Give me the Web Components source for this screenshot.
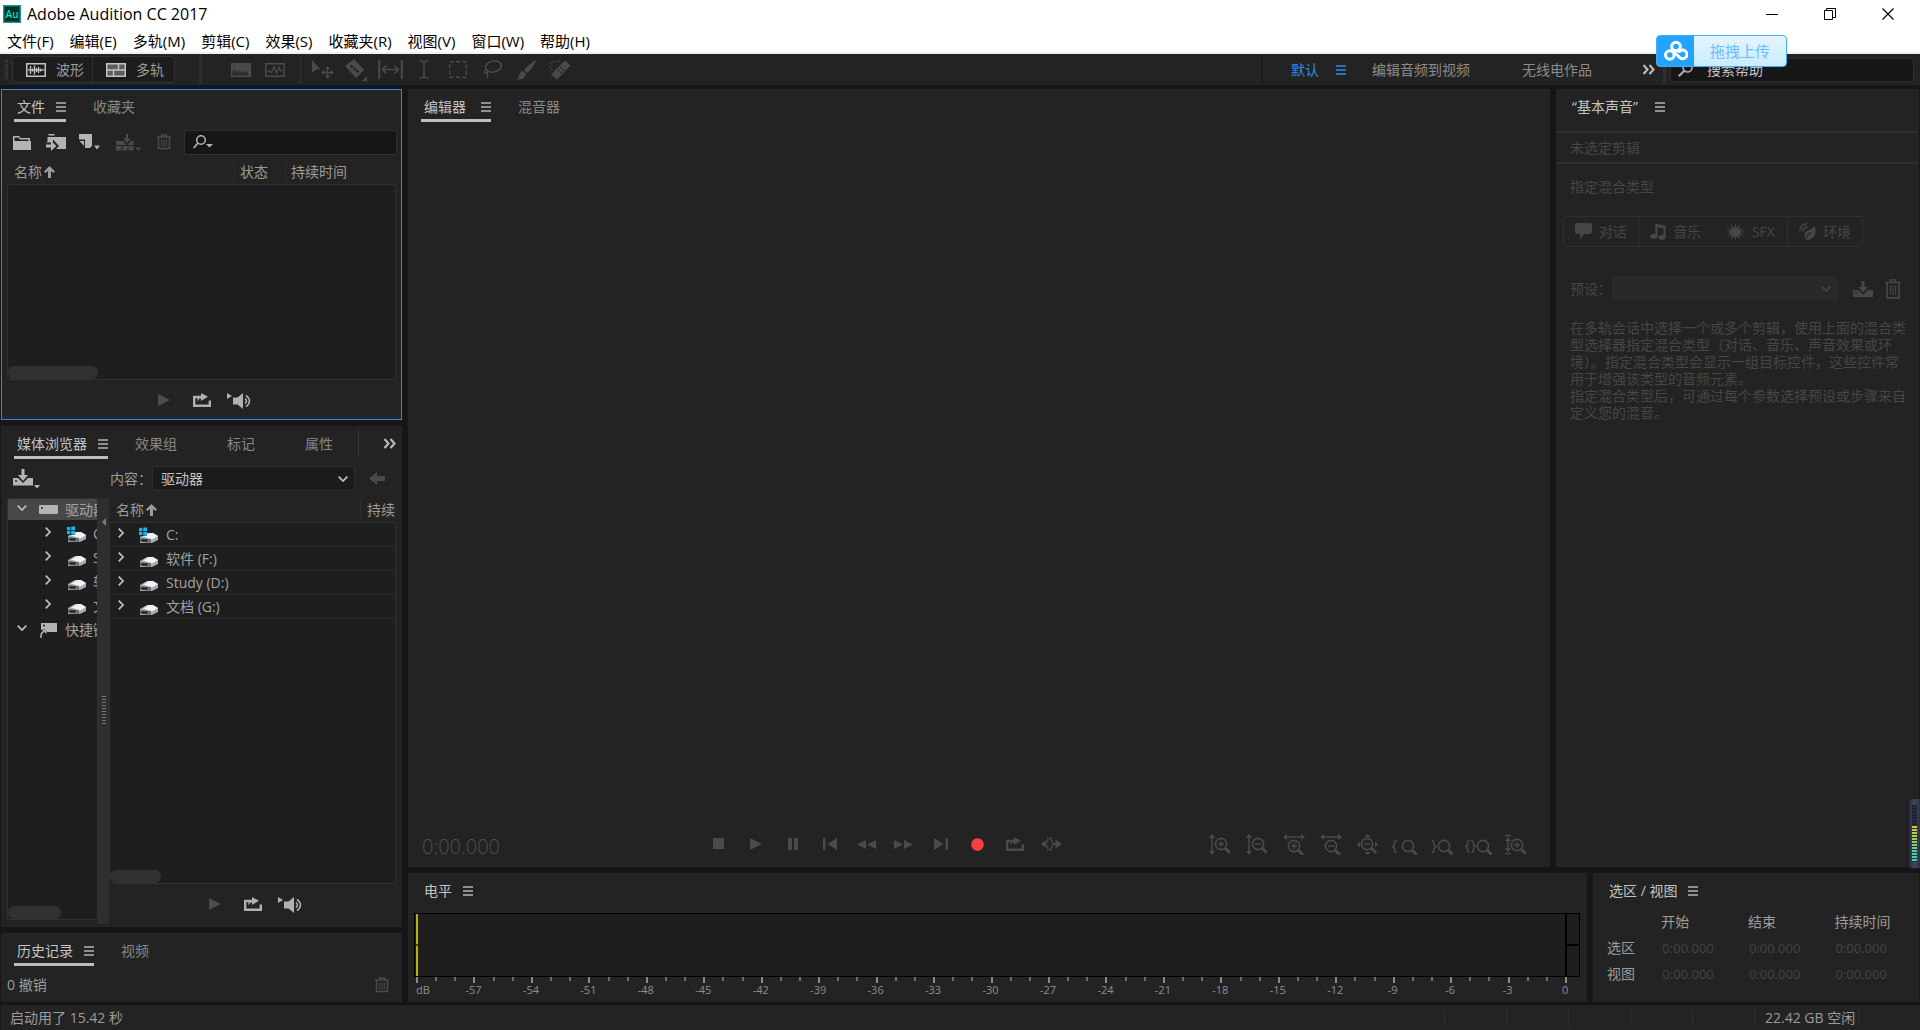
<!DOCTYPE html>
<html lang="zh-CN">
<head>
<meta charset="utf-8">
<title>Adobe Audition CC 2017</title>
<style>
html,body{height:100%;margin:0}
body{background:#161616;color:#9c9c9c;font:14px/20px "Open Sans","Noto Sans CJK SC",sans-serif;overflow:hidden}
</style>
</head>
<body>
<audition-app></audition-app>
<script>
const BASE = `<style>
*{box-sizing:border-box}
:host{display:block;box-sizing:border-box}
:host([hidden]){display:none}
button,input,select{font:inherit;color:inherit;background:none;border:0;margin:0;padding:0;outline:0;border-radius:0}
button{display:flex;align-items:center;justify-content:center;white-space:nowrap}
</style>`;
function define(name, html, setup) {
  const tpl = document.createElement('template');
  tpl.innerHTML = BASE + html;
  customElements.define(name, class extends HTMLElement {
    constructor() {
      super();
      this.attachShadow({ mode: 'open' }).append(tpl.content.cloneNode(true));
    }
    connectedCallback() { if (setup) setup(this, this.shadowRoot); }
  });
}

/* ---------- icons: [width, height, markup] ---------- */
const lens = (x, y, sign) => `<circle cx="${x}" cy="${y}" r="5.6" fill="none" stroke="currentColor" stroke-width="1.6"/>
<path d="M${x + 4} ${y + 4}l5 5" stroke="currentColor" stroke-width="3"/>` +
(sign ? `<path d="M${x - 3} ${y}h6${sign === '+' ? `M${x} ${y - 3}v6` : ''}" stroke="currentColor" stroke-width="1.4" fill="none"/>` : '');
const drive = `<path d="M1 10l7-4h6l5 3v4l-6 3H1z" fill="#a9adb2"/><path d="M4 9.500l6-3.500h4l5 3-6 3.500z" fill="#f1f2f5"/><path d="M1 11l11 1v4l-11-1z" fill="#6d7176"/><path d="M2.500 12.500h6v2h-6z" fill="#1c1c1c"/>`;
const ICONS = {
  au: [18, 18, `<rect width="18" height="18" fill="#0a9a86"/><rect x="1.500" y="1.500" width="15" height="15" fill="#022b2b"/><text x="9" y="13" text-anchor="middle" font-family="Open Sans,sans-serif" font-size="10" font-weight="600" fill="#00e4bb">Au</text>`],
  min: [12, 14, `<path d="M0 7.500h12" stroke="#000"/>`],
  restore: [12, 14, `<path d="M.5 3.500h8v9h-8zM2.500 3.500v-2h9v9h-3" fill="none" stroke="#000"/>`],
  close: [12, 14, `<path d="M.5 1.500l11 11M11.500 1.500l-11 11" fill="none" stroke="#000" stroke-width="1.200"/>`],
  menu: [10, 10, `<path d="M0 1h10M0 5h10M0 9h10" stroke="currentColor" stroke-width="1.300"/>`],
  wave: [20, 14, `<rect x=".75" y=".75" width="18.500" height="12.500" fill="none" stroke="currentColor" stroke-width="1.500"/><path d="M2 7h16" stroke="currentColor" stroke-width="1.300"/><path d="M4.500 3v8M8.500 2.500v9M12.500 4v6M6.500 5.500v3M10.500 5v4M14.500 5.500v3" stroke="currentColor" stroke-width="1.300"/>`],
  multi: [20, 14, `<rect x=".75" y=".75" width="18.500" height="12.500" fill="#5c5c5c" stroke="currentColor" stroke-width="1.500"/><path d="M1 7h18M12.500 1v6M7.500 7v6" stroke="currentColor" stroke-width="1.400"/>`],
  spectral: [20, 14, `<rect width="20" height="14" fill="currentColor"/><path d="M1.500 12.500v-4l1-2 .8 4 1-5 1 5 1-3 1 4 1-5 1 4 1-3 1 4 1-5 1 4 1-3 1 4 1-4 1 3V12.500z" fill="#2c2c2c"/>`],
  pitch: [20, 14, `<rect x=".75" y=".75" width="18.500" height="12.500" fill="none" stroke="currentColor" stroke-width="1.500"/><path d="M2 9l2.500-1.500 2 2L9 4l2.500 6 2.500-6 1.500 4 3-1" fill="none" stroke="currentColor" stroke-width="1.300"/>`],
  move: [23, 20, `<path d="M1 0l8.500 9.500H5L1 13z" fill="currentColor"/><path d="M11.500 12.500h10M16.500 7.500v10M14.700 9.200l1.800-2 1.800 2M14.700 15.800l1.800 2 1.800-2M13.200 10.700l-2 1.800 2 1.800M19.800 10.700l2 1.800-2 1.800" fill="none" stroke="currentColor" stroke-width="1.400"/>`],
  razor: [23, 22, `<path d="M0 7l9-7 10 11-8 8z" fill="currentColor"/><path d="M5.500 6.500l8 7" stroke="#232323" stroke-width="2.200" stroke-dasharray="3 1 2.500 1"/><path d="M22 17v5h-5z" fill="currentColor"/>`],
  slip: [25, 19, `<path d="M1.200 0v19M23.800 0v19" stroke="currentColor" stroke-width="2"/><path d="M4 9.500h17M8.500 5.500l-4 4 4 4M16.500 5.500l4 4-4 4" fill="none" stroke="currentColor" stroke-width="1.500"/>`],
  ibeam: [10, 19, `<path d="M.5.800Q5 .8 5 4v11q0 3.200-4.500 3.200M9.500.8Q5 .8 5 4M5 15q0 3.200 4.500 3.200" fill="none" stroke="currentColor" stroke-width="1.500"/>`],
  marquee: [18, 17, `<rect x=".75" y=".75" width="16.500" height="15.500" fill="none" stroke="currentColor" stroke-width="1.400" stroke-dasharray="4 2.400"/>`],
  lasso: [20, 19, `<ellipse cx="11.500" cy="6.500" rx="8" ry="5.500" transform="rotate(-12 11.500 6.500)" fill="none" stroke="currentColor" stroke-width="1.500"/><circle cx="4" cy="11.500" r="1.700" fill="none" stroke="currentColor" stroke-width="1.300"/><path d="M4 13q3 1 1 5" fill="none" stroke="currentColor" stroke-width="1.400"/>`],
  brush: [21, 20, `<path d="M20.500 0q-9 5-12.500 10l3 3Q17 8 20.500 0zM7 11l3 3q-1 6-10 5.500Q3 18 3.500 14.500T7 11z" fill="currentColor"/>`],
  heal: [22, 20, `<path d="M16 .5l5.500 5L8 19.500l-6-5z" fill="currentColor"/><g fill="#232323"><circle cx="9.500" cy="10.500" r=".9"/><circle cx="12" cy="12.500" r=".9"/><circle cx="12" cy="8" r=".9"/><circle cx="14.500" cy="10" r=".9"/></g><path d="M3 10Q-1 3 5 1.500T12 3" fill="none" stroke="currentColor" stroke-width="1.300" stroke-dasharray="1.500 1.500"/>`],
  more: [13, 11, `<path d="M1.500 1l4 4.500-4 4.500M7.500 1l4 4.500-4 4.500" fill="none" stroke="currentColor" stroke-width="2.200"/>`],
  search: [15, 15, `<circle cx="9.500" cy="5.500" r="4.500" fill="none" stroke="currentColor" stroke-width="1.700"/><path d="M6.300 8.700L.8 14.200" stroke="currentColor" stroke-width="2.200"/>`],
  searchmenu: [20, 14, `<circle cx="8" cy="5" r="4.300" fill="none" stroke="currentColor" stroke-width="1.500"/><path d="M5 8L.7 13" stroke="currentColor" stroke-width="1.700"/><path d="M13 9h7l-3.500 3.500z" fill="currentColor"/>`],
  folder: [18, 15, `<path d="M0 1h6l1.500 2H17v3H0z" fill="currentColor"/><path d="M1.500 2.500h4l1.500 2h8.500v1.500h-14z" fill="#232323"/><path d="M0 6h18v9H0z" fill="currentColor"/>`],
  import: [20, 17, `<path d="M2.500 0h6v1.500h-6zM0 3h20v12H10l3-3-6-6.500v3H0z" fill="currentColor"/><path d="M0 3h1.500v5H0z" fill="#232323"/><path d="M0 10.500h5V7l5.500 5L5 17v-3.500H0z" fill="currentColor"/>`],
  newfile: [21, 16, `<path d="M0 0h13v12l-2 2H6V5.500H0z" fill="currentColor"/><path d="M.5 7H5v5z" fill="currentColor"/><path d="M15 11.500h6l-3 4z" fill="currentColor"/>`],
  insert: [25, 17, `<path d="M0 7h7l4 4.500L15 7h2.500v9.500H0z" fill="currentColor"/><path d="M0 11.500h18M6 11.500v5M12 11v6" stroke="#232323"/><path d="M10 0h2v4.500h2.800L11 9 7.200 4.500H10z" fill="currentColor"/><path d="M19.500 13.500h5.500l-2.800 3.500z" fill="currentColor"/>`],
  trash: [14, 16, `<path d="M0 3h14M4.500 3V1h5v2M1.500 3.500v11h11v-11" fill="none" stroke="currentColor" stroke-width="1.500"/><path d="M4.700 5.500v7M7 5.500v7M9.300 5.500v7" stroke="currentColor" stroke-width="1.100"/>`],
  trashbig: [16, 20, `<path d="M0 3.500h16M5.500 3V1h5v2M2 4v14.800h12V4" fill="none" stroke="currentColor" stroke-width="1.700"/><path d="M5.500 6.500v9.500M8 6.500v9.500M10.500 6.500v9.500" stroke="currentColor" stroke-width="1.200"/>`],
  up: [11, 12, `<path d="M5.500 0L11 5.500 9.500 7 7 5v7H4V5L1.500 7 0 5.500z" fill="currentColor"/>`],
  play: [12, 12, `<path d="M0 0l12 6-12 6z" fill="currentColor"/>`],
  loop: [18, 14, `<path d="M6 4H1.200v8.800h15.600V7.500" fill="none" stroke="currentColor" stroke-width="2.400"/><path d="M4.500 8.500V3.500q.5-.8 2-.8H8V0l7 3.800L8 8V5.500H6.500z" fill="currentColor"/>`],
  speaker: [25, 17, `<path d="M0 1l5 3-5 3z" fill="currentColor"/><path d="M6 5.500h4.500L16 1v16l-5.500-4.500H6z" fill="currentColor"/><path d="M18 6.500q3 2.500 0 5M19 3.300q7 5.700 0 11.400" fill="none" stroke="currentColor" stroke-width="1.600"/>`],
  savedrop: [27, 19, `<path d="M0 9h5l5 5 5-5h5v7.500H0z" fill="currentColor"/><circle cx="3" cy="12" r="1" fill="#232323"/><path d="M8.500 0h3v6h3.500l-5 6-5-6h3.500z" fill="currentColor"/><path d="M21 16h6l-3 3.500z" fill="currentColor"/>`],
  save: [20, 16, `<path d="M0 9h5l5 4.500L15 9h5v7H0z" fill="currentColor"/><circle cx="3" cy="12" r="1" fill="#232323"/><path d="M8.500 0h3v6H15l-5 5.500L5 6h3.500z" fill="currentColor"/>`],
  back: [16, 13, `<path d="M0 6.500L8 0v4h8v5H8v4z" fill="currentColor"/>`],
  down: [10, 6, `<path d="M.7.700L5 5l4.300-4.300" fill="none" stroke="currentColor" stroke-width="1.700"/>`],
  right: [6, 10, `<path d="M.7.700L5 5 .7 9.300" fill="none" stroke="currentColor" stroke-width="1.700"/>`],
  rack: [19, 9, `<rect width="19" height="9" rx="1" fill="currentColor"/><circle cx="3" cy="3" r="1" fill="#222"/>`],
  shortcut: [17, 15, `<path d="M1 0h16v9H7L5 6l-4 1z" fill="currentColor"/><circle cx="4" cy="2.500" r="1" fill="#222"/><path d="M1 15Q.5 9.500 4 8.500" fill="none" stroke="currentColor" stroke-width="1.500"/><path d="M2 6.500h4.500V11z" fill="currentColor"/>`],
  drive: [20, 18, drive],
  sysdrive: [20, 18, drive + `<path d="M0 0h8v9H0z" fill="#1e1e1e"/><path d="M0 1.200L3.300.8V4.200H0zM4.200.7L8 .2V4.200H4.200zM0 5h3.300v3.300L0 8zM4.200 5H8v4l-3.800-.5z" fill="#12b7f5"/>`],
  stop: [12, 12, `<rect width="11" height="11" fill="currentColor"/>`],
  pause: [10, 12, `<path d="M0 0h4v12H0zM6 0h4v12H6z" fill="currentColor"/>`],
  prev: [14, 12, `<path d="M0 0h2.500v12H0zM14 0v12L4.500 6z" fill="currentColor"/>`],
  next: [14, 12, `<path d="M11.500 0H14v12h-2.500zM0 0v12l9.500-6z" fill="currentColor"/>`],
  rew: [19, 9, `<path d="M9 0v9L0 4.500zM19 0v9l-9-4.500z" fill="currentColor"/>`],
  ff: [19, 9, `<path d="M0 0v9l9-4.500zM10 0v9l9-4.500z" fill="currentColor"/>`],
  record: [13, 13, `<circle cx="6.500" cy="6.500" r="6.300" fill="#f73f3f"/>`],
  skip: [21, 14, `<path d="M7 0v2.500L4.500 7 7 11.500V14M10 0v2.500L12.500 7 10 11.500V14M4.500 7H2" fill="none" stroke="currentColor" stroke-width="1.500"/><path d="M0 7l4-3.500v7zM21 7l-6.500-4.500V6H12v2h2.500v3.500z" fill="currentColor"/>`],
  zvin: [21, 21, `<path d="M3 3v15" stroke="currentColor" stroke-width="1.500"/><path d="M0 4l3-4 3 4zM0 17l3 4 3-4z" fill="currentColor"/>` + lens(12, 10, '+')],
  zvout: [21, 21, `<path d="M3 3v15" stroke="currentColor" stroke-width="1.500"/><path d="M0 4l3-4 3 4zM0 17l3 4 3-4z" fill="currentColor"/>` + lens(12, 10, '-')],
  zhin: [22, 21, `<path d="M3 3h16" stroke="currentColor" stroke-width="1.500"/><path d="M4 0L0 3l4 3zM18 0l4 3-4 3z" fill="currentColor"/>` + lens(11, 12, '+')],
  zhout: [22, 21, `<path d="M3 3h16" stroke="currentColor" stroke-width="1.500"/><path d="M4 0L0 3l4 3zM18 0l4 3-4 3z" fill="currentColor"/>` + lens(11, 12, '-')],
  zfull: [21, 21, `<path d="M7.500 3h6l-3-3zM7.500 18h6l-3 3zM3 7.500v6l-3-3zM18 7.500v6l3-3z" fill="currentColor"/>` + lens(10, 10, '-')],
  zleft: [25, 21, `<path d="M4.500 6L2.500 8v3L.7 12.500 2.500 14v3l2 2" fill="none" stroke="currentColor" stroke-width="1.500"/>` + lens(16, 12, '')],
  zright: [22, 21, `<path d="M1 6l2 2v3l2 1.500L3 14v3l-2 2" fill="none" stroke="currentColor" stroke-width="1.500"/>` + lens(13, 12, '')],
  zsel: [27, 21, `<path d="M4.500 6L2.500 8v3L.7 12.500 2.500 14v3l2 2M6.500 6l2 2v3l2 1.500-2 1.500v3l-2 2" fill="none" stroke="currentColor" stroke-width="1.500"/>` + lens(18, 12, '')],
  ztrack: [21, 21, `<path d="M3 4v13M0 1.500h6M0 19.500h6" stroke="currentColor" stroke-width="1.500"/><path d="M0 7l3-4 3 4zM0 14l3 4 3-4z" fill="currentColor"/>` + lens(12, 11, '+')],
  talk: [17, 17, `<path d="M2 0h13q2 0 2 2v7q0 2-2 2H9l-4 5.500V11H2q-2 0-2-2V2q0-2 2-2z" fill="currentColor"/>`],
  music: [16, 17, `<path d="M6.500 13V2.500l8 1.500v10" fill="none" stroke="currentColor" stroke-width="2.200"/><path d="M5.400 1l10.200 1.500v3L5.400 4z" fill="currentColor"/><ellipse cx="3.800" cy="13.300" rx="3.600" ry="2.500" fill="currentColor"/><ellipse cx="12" cy="14.500" rx="3.500" ry="2.400" fill="currentColor"/>`],
  burst: [19, 17, `<path d="M9.500 0l1.200 5.300L14.500 1l-1.700 5.500L18.500 4.500 14 8l5 .8-5 1.200 4 3.800-5.200-2 1.300 4.700-3.400-3.500L9.500 17l-1.200-4-3.400 3.500 1.300-4.700-5.200 2 4-3.800L0 8.800 5 8 .5 4.500l5.700 2L4.500 1l3.800 4.300z" fill="currentColor"/>`],
  leaf: [17, 17, `<path d="M15.500 3q3 9-3 12.500T6 15Q4.500 9 9 7.500T15.500 3z" fill="currentColor"/><path d="M6.500 16.500Q8 12 12 9.500" stroke="#232323" stroke-width="1.300" fill="none"/><path d="M3.500 8.500Q4 4.500 8.500 4M.8 8Q1 1.500 8 .8" fill="none" stroke="currentColor" stroke-width="1.500"/>`],
  cloud: [24, 24, `<g fill="none" stroke="#fff" stroke-width="3"><circle cx="12" cy="7.500" r="4.300"/><circle cx="5.800" cy="16" r="4.300"/><path d="M9.500 12.500l6 5.800a4.300 4.300 0 1 0-.8-4.500"/></g>`]
};
customElements.define('au-icon', class extends HTMLElement {
  constructor() { super(); this.attachShadow({ mode: 'open' }); }
  connectedCallback() {
    const [w, h, body] = ICONS[this.getAttribute('name')];
    this.shadowRoot.innerHTML = `<style>:host{display:inline-flex;flex:none}svg{display:block}</style>
      <svg width="${w}" height="${h}" viewBox="0 0 ${w} ${h}" aria-hidden="true">${body}</svg>`;
  }
});

/* ---------- shared parts ---------- */
define('au-tab', `<style>
:host{flex:none;height:33px;display:flex}
button{height:33px;padding:5px 25px 0;color:#878787;border-bottom:3px solid transparent}
au-icon{display:none}
:host([active]) button{padding:5px 0 0 3px;gap:var(--tab-gap,11px);color:#c4c4c4}
:host([active]) au-icon{display:inline-flex;color:#b4b4b4}
:host([active]:not([plain])) button{border-color:#bdbdbd}
:host([active]) {margin-right:2px}
</style><button role="tab"><slot></slot><au-icon name="menu"></au-icon></button>`);

define('au-panel', `<style>
:host{background:#232323;display:flex;flex-direction:column;min-width:0;min-height:0;overflow:hidden}
:host([focused]){box-shadow:inset 0 0 0 1px #2d8ceb}
header{display:flex;height:33px;padding-left:13px;flex:none}
.end{flex:1;display:flex;min-width:0}
</style><header role="tablist"><slot name="tabs"></slot><div class="end"><slot name="end"></slot></div></header><slot></slot>`);

define('preview-bar', `<style>
:host{display:flex;justify-content:center;align-items:center;gap:23px;height:40px;padding-left:6px;flex:none;color:#b0b0b0}
.off{color:#4c4c4c}.pair{display:flex;gap:16px}
</style><button class="off" aria-label="播放"><au-icon name="play"></au-icon></button>
<div class="pair"><button aria-label="循环"><au-icon name="loop"></au-icon></button>
<button aria-label="自动播放"><au-icon name="speaker"></au-icon></button></div>`);

define('list-box', `<style>
:host{position:relative;display:flex;flex-direction:column;background:#1e1e1e;border:1px solid #303030;border-radius:2px;flex:1;min-height:0;overflow:hidden}
.thumb{margin-top:auto;height:13px;border-radius:6px;background:#313131;width:var(--thumb,90px);flex:none}
</style><slot></slot><div class="thumb"></div>`);

/* ---------- window chrome ---------- */
define('title-bar', `<style>
:host{background:#fff;color:#000;border-bottom:2px solid #f0f0f0;height:54px;font-size:15px}
.top{display:flex;height:28px;align-items:center;padding:0 3px;font-size:16px}
.top span{flex:1;padding-left:6px}
.top button{width:58px;height:28px}
nav{display:flex;gap:16px;padding-left:7px;height:26px;align-items:center}
</style><div class="top"><au-icon name="au"></au-icon><span>Adobe Audition CC 2017</span>
<button aria-label="最小化"><au-icon name="min"></au-icon></button><button aria-label="还原"><au-icon name="restore"></au-icon></button><button aria-label="关闭"><au-icon name="close"></au-icon></button></div>
<nav><button>文件(F)</button><button>编辑(E)</button><button>多轨(M)</button><button>剪辑(C)</button><button>效果(S)</button><button>收藏夹(R)</button><button>视图(V)</button><button>窗口(W)</button><button>帮助(H)</button></nav>`);

define('tool-bar', `<style>
:host{display:flex;align-items:center;height:31px;background:#232323;padding-left:5px}
.grip{width:3px;height:20px;background:repeating-linear-gradient(#3c3c3c 0 1px,transparent 1px 2px);margin-right:4px}
.modes{display:flex;border:1px solid #323232;border-radius:3px;background:#1d1d1d;height:27px}
.modes button{padding:0 8px 0 13px;gap:10px}
.modes button+button{border-left:1px solid #323232;padding-right:10px}
.modes au-icon{color:#c4c4c4}
.bar{width:3px;height:31px;background:#2d2d2d;margin-left:24px}
.thin{width:1px;height:27px;background:#303030;margin:0 4px 0 8px}
.tools{display:flex;color:#4a4a4a;align-items:center}
.tools button{width:34px;height:27px}
.views{margin-left:22px;display:flex}
.spaces{margin-left:auto;display:flex;align-items:center;height:31px;border-left:2px solid #1b1b1b;padding-left:28px;color:#8c8c8c}
.spaces .on{color:#2d8ceb;gap:17px;margin-right:26px}
.spaces .l{margin-right:52px}
.spaces .m{color:#b8b8b8;margin:0 8px 0 50px}
.search{display:flex;align-items:center;width:244px;height:24px;margin:0 6px 0 4px;border:1px solid #2f2f2f;border-radius:3px;background:#161616;padding:0 7px;gap:14px;color:#a8a8a8}
.sep{width:3px;height:31px;background:#2e2e2e}
input{flex:1;width:0;min-width:0;color:#c4c4c4}
input::placeholder{color:#c4c4c4;opacity:1}
</style><div class="grip"></div>
<div class="modes"><button><au-icon name="wave"></au-icon>波形</button><button><au-icon name="multi"></au-icon>多轨</button></div>
<div class="bar"></div>
<div class="tools views"><button aria-label="频谱频率"><au-icon name="spectral"></au-icon></button><button aria-label="频谱音调"><au-icon name="pitch"></au-icon></button></div>
<div class="thin"></div>
<div class="tools"><button aria-label="移动"><au-icon name="move"></au-icon></button><button aria-label="剃刀"><au-icon name="razor"></au-icon></button><button aria-label="滑动"><au-icon name="slip"></au-icon></button><button aria-label="时间选择"><au-icon name="ibeam"></au-icon></button><button aria-label="框选"><au-icon name="marquee"></au-icon></button><button aria-label="套索"><au-icon name="lasso"></au-icon></button><button aria-label="画笔"><au-icon name="brush"></au-icon></button><button aria-label="修复"><au-icon name="heal"></au-icon></button></div>
<div class="spaces"><button class="on">默认<au-icon name="menu"></au-icon></button><button class="l">编辑音频到视频</button><button>无线电作品</button><button class="m" aria-label="更多"><au-icon name="more"></au-icon></button><div class="sep"></div>
<label class="search"><au-icon name="search"></au-icon><input type="search" placeholder="搜索帮助" aria-label="搜索帮助"></label></div>`);

define('upload-badge', `<style>
:host{position:absolute;right:133px;top:35px}
button{width:131px;height:32px;border:1px solid #4aa9f5;border-radius:4px;background:linear-gradient(#e4f5ff,#c9ecff);overflow:hidden;justify-content:flex-start;color:#6dbdfb;font-size:15px}
i{display:flex;width:37px;height:32px;align-items:center;justify-content:center;background:#22a3ff}
span{flex:1;text-align:center}
</style><button><i><au-icon name="cloud"></au-icon></i><span>拖拽上传</span></button>`);

/* ---------- left column ---------- */
define('files-panel', `<style>
:host{display:flex;flex:none}
au-panel{flex:1;height:331px}
.tools{display:flex;align-items:center;height:38px;padding:2px 5px 0 12px;color:#b4b4b4;flex:none}
.tools .a{margin-right:15px}.tools .b{margin-right:13px}.tools .c{margin-right:16px}.tools .off{color:#4a4a4a}
.search{flex:1;min-width:0;display:flex;align-items:center;height:25px;border:1px solid #303030;border-radius:3px;background:#161616;padding:0 8px;gap:6px}
input{flex:1;width:0;min-width:0}
.head{display:flex;height:24px;align-items:center;margin:0 6px;padding-left:7px;flex:none}
.head span{border-left:1px solid #2b2b2b;padding-left:5px;height:20px}
.n{flex:1;display:flex;align-items:center;gap:2px}.s{width:51px}.d{width:111px}
list-box{margin:0 6px}
</style><au-panel focused><au-tab slot="tabs" active>文件</au-tab><au-tab slot="tabs">收藏夹</au-tab>
<div class="tools"><button class="a" aria-label="打开文件"><au-icon name="folder"></au-icon></button><button class="b" aria-label="导入文件"><au-icon name="import"></au-icon></button><button class="c" aria-label="新建文件"><au-icon name="newfile"></au-icon></button><button class="c off" aria-label="插入到多轨"><au-icon name="insert"></au-icon></button><button class="b off" aria-label="删除"><au-icon name="trash"></au-icon></button><label class="search"><au-icon name="searchmenu"></au-icon><input type="search" aria-label="搜索文件"></label></div>
<div class="head"><div class="n">名称<au-icon name="up"></au-icon></div><span class="s">状态</span><span class="d">持续时间</span></div>
<list-box></list-box><preview-bar></preview-bar></au-panel>`);

define('drive-row', `<style>
:host{display:flex;align-items:center;height:24px;flex:none;white-space:nowrap;color:#a2a2a2;padding-left:8px}
.t{width:12px;display:flex;flex:none;justify-content:center;color:#c0c0c0;margin-bottom:4px}
.i{width:20px;display:flex;flex:none;justify-content:center;margin:0 7px 0 10px;color:#b4b4b4}
:host([sub]){padding-left:34px}
:host([sub]) .i{margin:2px 6px 0 13px}
:host([list]){border-bottom:1px solid #2c2c2c;padding-left:5px}
:host([list]) .i{margin:2px 7px 0 12px}
:host([selected]){background:#474747;height:21px;margin-bottom:2px}
</style><span class="t"></span><span class="i"></span><slot></slot>`, (el, root) => {
  const add = (sel, name) => { const i = document.createElement('au-icon'); i.setAttribute('name', name); root.querySelector(sel).replaceChildren(i); };
  add('.t', el.hasAttribute('open') ? 'down' : 'right');
  add('.i', el.getAttribute('icon'));
});

define('media-panel', `<style>
:host{display:flex;flex:1;min-height:0}
au-panel{flex:1}
.more{margin-left:auto;border-left:1px solid #353535;width:50px;height:27px;margin-top:4px;padding-left:18px;color:#b8b8b8}
.row{display:flex;align-items:center;height:39px;flex:none;padding:0 17px 0 12px}
.row button{color:#b4b4b4}
label{margin-left:auto;display:flex;align-items:center;gap:0}
.pick{display:flex;position:relative;align-items:center;margin-right:14px}
.pick au-icon{position:absolute;right:7px;color:#c4c4c4;pointer-events:none}
select{appearance:none;width:203px;height:25px;border:1px solid #303030;border-radius:3px;background:#1b1b1b;color:#c4c4c4;padding:0 8px}
.row .back{color:#4a4a4a}
.main{display:flex;flex:1;min-height:0;padding:0 6px 3px;}
.tree{width:91px;display:flex;flex:none;padding-bottom:4px}
.tree list-box{--thumb:53px}
.split{width:11px;background:#2e2e2e;flex:none;display:flex;flex-direction:column;align-items:center;justify-content:space-between}
.split b{border:4px solid transparent;border-right-color:#7c7c7c;border-left:0;margin-top:20px}
.split i{width:4px;height:30px;background:repeating-linear-gradient(#777 0 1px,transparent 1px 3px)}
.split u{height:28px}
.list{flex:1;min-width:0;display:flex;flex-direction:column}
.list list-box{--thumb:51px}
.head{display:flex;height:24px;align-items:center;padding-left:7px;flex:none;overflow:hidden;white-space:nowrap}
.n{flex:1;display:flex;align-items:center;gap:2px}
.d{width:36px;padding-left:6px;border-left:1px solid #2e2e2e;overflow:hidden}
</style><au-panel><au-tab slot="tabs" active>媒体浏览器</au-tab><au-tab slot="tabs">效果组</au-tab><au-tab slot="tabs">标记</au-tab><au-tab slot="tabs">属性</au-tab><button slot="end" class="more" aria-label="更多"><au-icon name="more"></au-icon></button>
<div class="row"><button aria-label="导入"><au-icon name="savedrop"></au-icon></button><label>内容：<span class="pick"><select><option>驱动器</option></select><au-icon name="down"></au-icon></span></label><button class="back" aria-label="后退"><au-icon name="back"></au-icon></button></div>
<div class="main"><div class="tree"><list-box><drive-row open selected icon="rack">驱动器</drive-row><drive-row sub icon="sysdrive">C:</drive-row><drive-row sub icon="drive">Study (D:)</drive-row><drive-row sub icon="drive">软件 (F:)</drive-row><drive-row sub icon="drive">文档 (G:)</drive-row><drive-row open icon="shortcut">快捷键</drive-row></list-box></div>
<div class="split"><b></b><i></i><u></u></div>
<div class="list"><div class="head"><div class="n">名称<au-icon name="up"></au-icon></div><span class="d">持续时间</span></div>
<list-box><drive-row list icon="sysdrive">C:</drive-row><drive-row list icon="drive">软件 (F:)</drive-row><drive-row list icon="drive">Study (D:)</drive-row><drive-row list icon="drive">文档 (G:)</drive-row></list-box><preview-bar></preview-bar></div></div></au-panel>`);

define('history-panel', `<style>
:host{display:flex;flex:none}
au-panel{flex:1;height:69px}
div{display:flex;justify-content:space-between;align-items:center;height:36px;padding:2px 13px 0 6px}
button{color:#4a4a4a}
</style><au-panel><au-tab slot="tabs" active>历史记录</au-tab><au-tab slot="tabs">视频</au-tab><div><span>0 撤销</span><button aria-label="删除"><au-icon name="trash"></au-icon></button></div></au-panel>`);

/* ---------- centre and right ---------- */
define('editor-panel', `<style>
:host{display:flex;flex:1;min-width:0;--tab-gap:15px}
au-panel{flex:1}
.space{flex:1}
.bar{display:flex;align-items:center;height:46px;padding:0 16px 0 14px;color:#4a4a4a;flex:none}
.time{font-size:20px;line-height:24px;font-weight:300;color:#505050;flex:3;padding-top:5px}
.set{display:flex}
.set button{width:37px;height:30px}
.zoom{flex:5;display:flex;justify-content:flex-end}
</style><au-panel><au-tab slot="tabs" active>编辑器</au-tab><au-tab slot="tabs">混音器</au-tab><div class="space"></div>
<div class="bar"><div class="time">0:00.000</div><div class="set play"></div><div class="zoom"><div class="set z"></div></div></div></au-panel>`, (el, root) => {
  const fill = (sel, list) => { root.querySelector(sel).innerHTML = list.map(([n, l]) => `<button aria-label="${l}"><au-icon name="${n}"></au-icon></button>`).join(''); };
  fill('.play', [['stop', '停止'], ['play', '播放'], ['pause', '暂停'], ['prev', '上一个'], ['rew', '快退'], ['ff', '快进'], ['next', '下一个'], ['record', '录制'], ['loop', '循环'], ['skip', '跳过']]);
  fill('.z', [['zvin', '放大振幅'], ['zvout', '缩小振幅'], ['zhin', '放大时间'], ['zhout', '缩小时间'], ['zfull', '全部缩小'], ['zleft', '放大入点'], ['zright', '放大出点'], ['zsel', '缩放至选区'], ['ztrack', '缩放轨道']]);
});

define('sound-panel', `<style>
:host{display:flex;width:363px;flex:none;--tab-gap:17px}
au-panel{flex:1;color:#464646}
.clip{border:solid #2e2e2e;border-width:2px 0;margin:9px 1px 0;padding:5px 13px 4px;height:33px}
.sub{margin:13px 14px 0}
.types{display:flex;margin:19px 7px 0;width:300px;height:31px;border:1px solid #303030;border-radius:2px}
.types button{flex:1;gap:7px;border-right:1px solid #303030}
.types button:nth-child(2){border-right-color:transparent}
.types button:last-child{border:0}
.row{display:flex;align-items:center;margin:29px 18px 0 14px;height:25px}
.pick{flex:1;position:relative;display:flex;align-items:center;margin-right:15px}
.pick au-icon{position:absolute;right:7px;pointer-events:none}
label{display:flex;flex:1;align-items:center}
select{appearance:none;flex:1;height:25px;border-radius:3px;background:#292929}
.row button+button{margin-left:12px}
p{margin:18px 0 0 14px;width:340px;line-height:17px}
</style><au-panel><au-tab slot="tabs" active plain>“基本声音”</au-tab>
<div class="clip">未选定剪辑</div><div class="sub">指定混合类型</div>
<div class="types"><button><au-icon name="talk"></au-icon>对话</button><button><au-icon name="music"></au-icon>音乐</button><button><au-icon name="burst"></au-icon>SFX</button><button><au-icon name="leaf"></au-icon>环境</button></div>
<div class="row"><label>预设：<span class="pick"><select></select><au-icon name="down"></au-icon></span></label><button aria-label="保存预设"><au-icon name="save"></au-icon></button><button aria-label="删除预设"><au-icon name="trashbig"></au-icon></button></div>
<p>在多轨会话中选择一个或多个剪辑，使用上面的混合类型选择器指定混合类型（对话、音乐、声音效果或环境）。指定混合类型会显示一组目标控件，这些控件常用于增强该类型的音频元素。<br>指定混合类型后，可通过每个参数选择预设或步骤来自定义您的混音。</p></au-panel>`);

define('levels-panel', `<style>
:host{display:flex;flex:1;min-width:0}
au-panel{flex:1}
.meter{display:flex;height:64px;margin:7px 7px 0 6px;border:1px solid #000;background:#1e1e1e;flex:none}
.live{flex:1;margin-left:1px;background:linear-gradient(#b5b400 0 30px,#4a4a10 30px 32px,#b5b400 32px) left/2px 100% no-repeat}
.clip{width:14px;border-left:2px solid #000;display:flex;flex-direction:column}
.clip i{flex:1}.clip i+i{border-top:2px solid #000}
.scale{display:flex;margin:0 22px 0 8px;font-size:11px;line-height:14px;color:#8f8f8f}
.step{flex:1;display:flex;flex-direction:column}
.ticks{display:flex;height:6px}
.ticks i{flex:1;border-left:2px solid #6f6f6f;height:4px}
.ticks i:first-child{height:6px;border-color:#8a8a8a}
.last{flex:none;width:0}
.last .ticks i{flex:none}
.lab{width:0;display:flex;justify-content:center;white-space:nowrap}
.step:first-child .lab{justify-content:flex-start}
</style><au-panel><au-tab slot="tabs" active plain>电平</au-tab><div class="meter"><div class="live"></div><div class="clip"><i></i><i></i></div></div><div class="scale"></div></au-panel>`, (el, root) => {
  let out = '';
  for (let v = -60; v <= 0; v += 3)
    out += `<div class="step${v ? '' : ' last'}"><div class="ticks"><i></i>${v ? '<i></i><i></i>' : ''}</div><span class="lab">${v === -60 ? 'dB' : v}</span></div>`;
  root.querySelector('.scale').innerHTML = out;
});

define('selection-panel', `<style>
:host{display:flex;width:326px;flex:none}
au-panel{flex:1}
table{border-collapse:collapse;margin:3px 0 0 14px;table-layout:fixed;width:314px}
th,td{padding:0;height:26px;text-align:left;font-weight:400;width:86px}
th:first-child{width:54px}
td{color:#444;font-size:13px;padding-left:1px}
</style><au-panel><au-tab slot="tabs" active plain>选区 / 视图</au-tab>
<table><tr><th></th><th>开始</th><th>结束</th><th>持续时间</th></tr><tr><th>选区</th><td>0:00.000</td><td>0:00.000</td><td>0:00.000</td></tr><tr><th>视图</th><td>0:00.000</td><td>0:00.000</td><td>0:00.000</td></tr></table></au-panel>`);

define('status-bar', `<style>
:host{display:flex;align-items:center;height:25px;background:#232323;padding:0 61px 0 9px;margin-left:1px}
.msg{flex:1}
i{width:62px;height:16px;border-left:1px solid #303030}
.free{border:solid #303030;border-width:0 1px;padding:0 7px 0 10px;height:16px;line-height:16px;width:105px;white-space:nowrap}
</style><span class="msg">启动用了 15.42 秒</span><i></i><i></i><i></i><i></i><i></i><span class="free">22.42 GB 空闲</span>`);

define('level-gadget', `<style>
:host{position:absolute;right:0;bottom:161px;width:12px;height:71px;background:linear-gradient(90deg,#2b2d3c,#44475c 50%,#2f3142);border-radius:4px 0 0 4px;border:1px solid #1b1c26;border-right:0;padding:6px 3px 6px 3px}
div{height:57px;background:repeating-linear-gradient(transparent 0 2px,#2c2e3e 2px 3px),linear-gradient(#1f2233 0 20px,#d8c43a 20px,#a8d04a 32px,#3fd0b0 50px)}
</style><div></div>`);

define('audition-app', `<style>
:host{display:flex;flex-direction:column;height:100vh;position:relative}
main{flex:1;display:flex;gap:6px;min-height:0;padding:4px 1px 3px 1px}
.left{width:401px;display:flex;flex-direction:column;gap:6px;flex:none}
.rest{flex:1;min-width:0;display:flex;flex-direction:column;gap:6px}
.r{display:flex;gap:6px;min-height:0}
.top{flex:1}.bot{height:129px;flex:none}
</style><title-bar></title-bar><tool-bar></tool-bar>
<main><div class="left"><files-panel></files-panel><media-panel></media-panel><history-panel></history-panel></div>
<div class="rest"><div class="r top"><editor-panel></editor-panel><sound-panel></sound-panel></div><div class="r bot"><levels-panel></levels-panel><selection-panel></selection-panel></div></div></main>
<status-bar></status-bar><upload-badge></upload-badge><level-gadget></level-gadget>`);
</script>
</body>
</html>
